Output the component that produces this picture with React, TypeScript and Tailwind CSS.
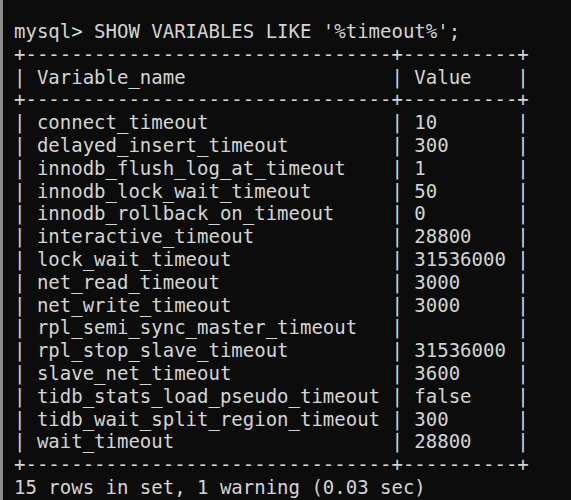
import React from 'react';

const ROWS: [string, string][] = [
  ['connect_timeout', '10'],
  ['delayed_insert_timeout', '300'],
  ['innodb_flush_log_at_timeout', '1'],
  ['innodb_lock_wait_timeout', '50'],
  ['innodb_rollback_on_timeout', '0'],
  ['interactive_timeout', '28800'],
  ['lock_wait_timeout', '31536000'],
  ['net_read_timeout', '3000'],
  ['net_write_timeout', '3000'],
  ['rpl_semi_sync_master_timeout', ''],
  ['rpl_stop_slave_timeout', '31536000'],
  ['slave_net_timeout', '3600'],
  ['tidb_stats_load_pseudo_timeout', 'false'],
  ['tidb_wait_split_region_timeout', '300'],
  ['wait_timeout', '28800'],
];

const NAME_W = 30;
const VALUE_W = 8;

const sep = '+' + '-'.repeat(NAME_W + 2) + '+' + '-'.repeat(VALUE_W + 2) + '+';
const row = (a: string, b: string) => '| ' + a.padEnd(NAME_W) + ' | ' + b.padEnd(VALUE_W) + ' |';

const lines = [
  "mysql> SHOW VARIABLES LIKE '%timeout%';",
  sep,
  row('Variable_name', 'Value'),
  sep,
  ...ROWS.map(([a, b]) => row(a, b)),
  sep,
  '15 rows in set, 1 warning (0.03 sec)',
];

const App: React.FC = () => {
  return (
    <div className="w-[571px] h-[500px] overflow-hidden bg-[#0c0c0c] border-l-[3px] border-[#8c8c8c]">
      <pre className="pt-[20px] pl-[11px] m-0 text-[#d4d4d4] text-[19px] leading-[22.8px] font-['DejaVu_Sans_Mono',monospace]">
        {lines.join('\n')}
      </pre>
    </div>
  );
};

export default App;
